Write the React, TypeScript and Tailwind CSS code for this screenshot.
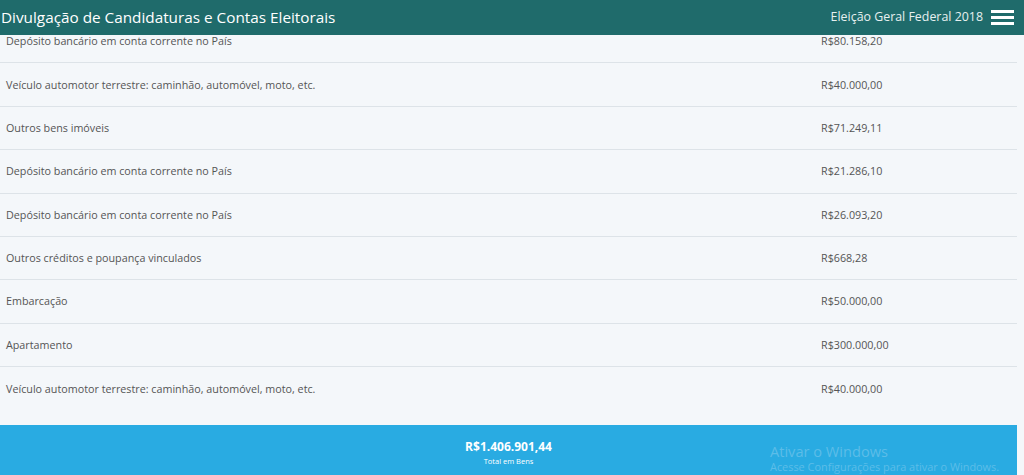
const bens: [string, string][] = [
  ['Depósito bancário em conta corrente no País', 'R$80.158,20'],
  ['Veículo automotor terrestre: caminhão, automóvel, moto, etc.', 'R$40.000,00'],
  ['Outros bens imóveis', 'R$71.249,11'],
  ['Depósito bancário em conta corrente no País', 'R$21.286,10'],
  ['Depósito bancário em conta corrente no País', 'R$26.093,20'],
  ['Outros créditos e poupança vinculados', 'R$668,28'],
  ['Embarcação', 'R$50.000,00'],
  ['Apartamento', 'R$300.000,00'],
  ['Veículo automotor terrestre: caminhão, automóvel, moto, etc.', 'R$40.000,00'],
];

export default function App() {
  return (
    <div
      className="relative h-[475px] w-[1024px] overflow-hidden bg-[#f4f7fa]"
      style={{ fontFamily: '"Open Sans", "Liberation Sans", sans-serif' }}
    >
      {/* fixed top bar over the scrolled list */}
      <header className="absolute top-0 left-0 z-10 flex h-[35px] w-full items-center justify-between bg-[#1f6b6b] pr-[10px] text-white">
        <h1 className="pl-[1px] text-[15.3px] leading-none">Divulgação de Candidaturas e Contas Eleitorais</h1>
        <div className="flex items-center gap-[8px]">
          <span className="text-[12.4px] text-[#e6f0f0]">Eleição Geral Federal 2018</span>
          <div className="flex w-[23px] flex-col gap-[3px]">
            <span className="h-[3px] w-full bg-white"></span>
            <span className="h-[3px] w-full bg-white"></span>
            <span className="h-[3px] w-full bg-white"></span>
          </div>
        </div>
      </header>

      <div className="w-[1017px] pt-[20px]">
        <div>
          {bens.map(([descricao, valor], i) => (
            <div
              key={i}
              className="flex h-[43.4px] items-center border-b border-[#dde3e8] text-[10.75px] text-[#555] last:border-b-0"
            >
              <span className="w-[821px] pl-[6px]">{descricao}</span>
              <span>{valor}</span>
            </div>
          ))}
        </div>

        <div className="mt-[14px] flex h-[60px] flex-col items-center bg-[#29abe2] pt-[14px] text-white">
          <span className="text-[12px] leading-[16px] font-bold">R$1.406.901,44</span>
          <span className="text-[7.5px] leading-[12px]">Total em Bens</span>
        </div>
      </div>

      {/* OS activation watermark */}
      <div className="pointer-events-none absolute top-[442px] left-[770px] text-[#5cbde8]">
        <div className="text-[14.6px] leading-[18px]">Ativar o Windows</div>
        <div className="text-[10.9px] leading-[14px]">Acesse Configurações para ativar o Windows.</div>
      </div>
    </div>
  );
}
